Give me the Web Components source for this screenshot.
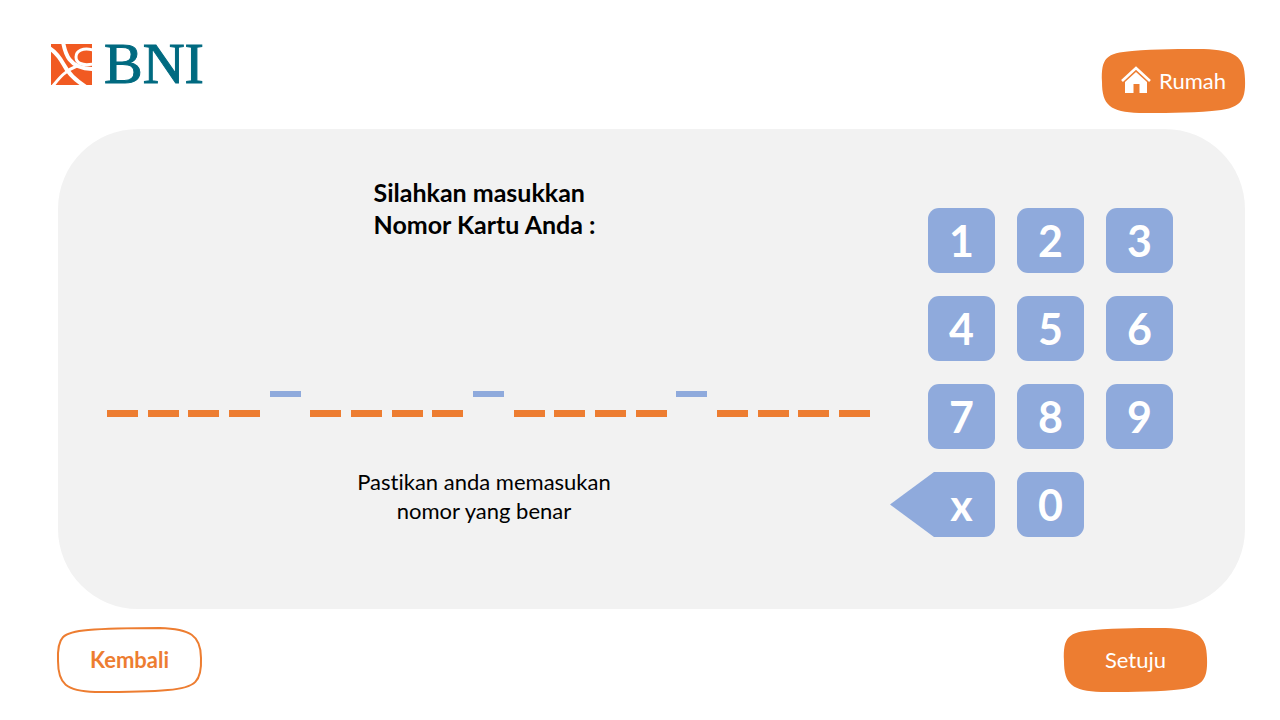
<!DOCTYPE html>
<html lang="id">
<head>
<meta charset="utf-8">
<meta name="viewport" content="width=device-width, initial-scale=1">
<title>BNI - Nomor Kartu</title>
<style>
  body { margin: 0; background: #fff; color: #000; font-family: Lato, "Liberation Sans", sans-serif; font-variant-ligatures: no-common-ligatures; }
</style>
</head>
<body>
<atm-screen>
  <bni-logo slot="brand"></bni-logo>
  <soft-button slot="home" variant="solid">
    <home-icon slot="icon"></home-icon>Rumah
  </soft-button>
  <card-number-form>
    <span slot="title">Silahkan masukkan<br>Nomor Kartu Anda :</span>
    <span slot="note">Pastikan anda memasukan<br>nomor yang benar</span>
  </card-number-form>
  <key-pad></key-pad>
  <soft-button slot="back" variant="outline">Kembali</soft-button>
  <soft-button slot="confirm" variant="solid">Setuju</soft-button>
</atm-screen>

<script>
const define = (name, markup, setup) => {
  const template = document.createElement('template');
  template.innerHTML = markup;
  customElements.define(name, class extends HTMLElement {
    constructor() {
      super();
      this.attachShadow({ mode: 'open' }).append(template.content.cloneNode(true));
      if (setup) setup(this);
    }
  });
};

define('atm-screen', `
  <style>
    :host { display: block; }
    header { display: flex; justify-content: space-between; align-items: flex-start; padding: 40px 34px 15px 50px; }
    ::slotted([slot="home"]) { margin-top: 8px; }
    main { display: flex; gap: 20px; margin: 0 35px 0 58px; padding: 47px 72px 72px 49px; background: #f2f2f2; border-radius: 80px; }
    footer { display: flex; justify-content: space-between; padding: 18px 72px 28px 57px; }
  </style>
  <header><slot name="brand"></slot><slot name="home"></slot></header>
  <main><slot></slot></main>
  <footer><slot name="back"></slot><slot name="confirm"></slot></footer>
`);

define('bni-logo', `
  <style>
    :host { display: flex; align-items: flex-start; gap: 12px; }
    svg { display: block; margin: 4px 0 0 1px; }
    span { font: 58px/48px "Liberation Serif", serif; color: #006a80; -webkit-text-stroke: 1px #006a80; }
  </style>
  <svg width="41" height="41" viewBox="0 0 41 41" aria-hidden="true">
    <rect width="41" height="41" fill="#f15a22"/>
    <g fill="none" stroke="#fff">
      <path d="M-2 4 C5 8 9 14 13 21 C17 29 24 36 35 43" stroke-width="4"/>
      <path d="M12 -2 C14 8 17 25 42 25" stroke-width="4"/>
      <path d="M42 6 C32 3 25 7 25 13 C25 19 31 22 42 20" stroke-width="3"/>
      <path d="M1 43 C9 33 15 26 26 22" stroke-width="3"/>
    </g>
  </svg>
  <span>BNI</span>
`);

define('home-icon', `
  <style>:host { display: block; } svg { display: block; }</style>
  <svg width="30" height="28" viewBox="0 0 30 28" aria-hidden="true">
    <path d="M1 15 L15 2 L29 15" fill="none" stroke="#fff" stroke-width="2.6"/>
    <path d="M15 6 L26 16 V27 H18.500 V18 H12.500 V27 H4 V16 Z" fill="#fff"/>
  </svg>
`);

define('soft-button', `
  <style>
    :host { display: block; width: 145px; font-size: 22px; }
    button { position: relative; box-sizing: border-box; display: flex; align-items: center; justify-content: center; gap: 8px; width: 100%; height: 66px; margin: 0; padding: 0 0 2px; border: 0; background: none; color: #fff; font: inherit; cursor: pointer; }
    .shape { position: absolute; inset: 0; width: 100%; height: 100%; overflow: visible; fill: #ed7d31; }
    .label { position: relative; }
    ::slotted([slot="icon"]) { position: relative; }
    :host([variant="outline"]) button { color: #ed7d31; font-weight: 700; }
    :host([variant="outline"]) .shape { fill: #fff; stroke: #ed7d31; stroke-width: 2; }
  </style>
  <button type="button">
    <svg class="shape" viewBox="0 0 144 66" preserveAspectRatio="none" aria-hidden="true">
      <path d="M1 34 C0 10 5 5 31 3 C54 1 82 1 102 1 C132 2 143 8 143 31 C144 54 138 61 110 63 C88 65 58 65 38 65 C9 64 1 57 1 34 Z"/>
    </svg>
    <slot name="icon"></slot>
    <span class="label"><slot></slot></span>
  </button>
`);

define('card-number-form', `
  <style>
    :host { display: flex; flex: 1; min-width: 0; flex-direction: column; align-items: center; }
    h1 { margin: 0 8px 0 0; font-size: 25px; line-height: 32px; font-weight: 700; }
    .digits { display: flex; justify-content: space-between; width: 100%; margin-top: 129px; }
    input { box-sizing: border-box; flex: 0 1 31px; min-width: 0; width: 31px; height: 48px; margin: 0; padding: 0; border: 0; border-bottom: 7px solid #ed7d31; border-radius: 0; background: none; font: 28px Lato, sans-serif; text-align: center; outline: none; }
    i { flex: 0 1 31px; height: 6px; margin-top: 22px; background: #8faadc; }
    p { margin: 50px 9px 0 0; font-size: 22px; line-height: 29px; text-align: center; }
  </style>
  <h1><slot name="title"></slot></h1>
  <div class="digits" role="group" aria-label="Nomor Kartu"></div>
  <p><slot name="note"></slot></p>
`, host => {
  const row = host.shadowRoot.querySelector('.digits');
  for (let n = 1; n <= 16; n++) {
    const input = document.createElement('input');
    input.type = 'text';
    input.inputMode = 'numeric';
    input.maxLength = 1;
    input.setAttribute('aria-label', 'Digit ' + n);
    row.append(input);
    if (n % 4 === 0 && n < 16) row.append(document.createElement('i'));
  }
  const boxes = [...row.querySelectorAll('input')];
  document.addEventListener('key-press', e => {
    if (e.detail === 'x') {
      const last = boxes.filter(b => b.value).pop();
      if (last) last.value = '';
    } else {
      const next = boxes.find(b => !b.value);
      if (next) next.value = e.detail;
    }
  });
});

define('key-pad', `
  <style>
    :host { display: grid; flex: none; grid-template-columns: 105px 67px 67px; grid-auto-rows: 65px; gap: 23px 22px; justify-items: end; padding-top: 32px; }
    button { width: 67px; height: 65px; margin: 0; padding: 0; border: 0; border-radius: 11px; background: #8faadc; color: #fff; font: 700 43px/65px Lato, sans-serif; cursor: pointer; }
    .erase { width: 105px; padding-left: 38px; clip-path: polygon(0 50%, 44px 0, 100% 0, 100% 100%, 44px 100%); }
  </style>
  <button type="button">1</button><button type="button">2</button><button type="button">3</button>
  <button type="button">4</button><button type="button">5</button><button type="button">6</button>
  <button type="button">7</button><button type="button">8</button><button type="button">9</button>
  <button type="button" class="erase" aria-label="x, hapus">x</button><button type="button">0</button>
`, host => {
  host.shadowRoot.addEventListener('click', e => {
    const key = e.target.closest('button');
    if (key) host.dispatchEvent(new CustomEvent('key-press', { detail: key.textContent, bubbles: true }));
  });
});
</script>
</body>
</html>
